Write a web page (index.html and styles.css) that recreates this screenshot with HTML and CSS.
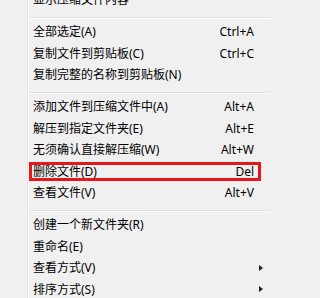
FILE: index.html
```html
<!DOCTYPE html>
<html lang="zh-CN">
<head>
<meta charset="utf-8">
<link rel="stylesheet" href="styles.css">
</head>
<body>
<div class="menu">
  <div class="item"><span class="label">显示压缩文件内容</span></div>
  <div class="sep"><div class="line"></div></div>
  <div class="item"><span class="label">全部选定(A)</span><span class="key">Ctrl+A</span></div>
  <div class="item"><span class="label">复制文件到剪贴板(C)</span><span class="key">Ctrl+C</span></div>
  <div class="item"><span class="label">复制完整的名称到剪贴板(N)</span></div>
  <div class="sep"><div class="line"></div></div>
  <div class="item"><span class="label">添加文件到压缩文件中(A)</span><span class="key">Alt+A</span></div>
  <div class="item"><span class="label">解压到指定文件夹(E)</span><span class="key">Alt+E</span></div>
  <div class="item"><span class="label">无须确认直接解压缩(W)</span><span class="key">Alt+W</span></div>
  <div class="item marked"><span class="label">删除文件(D)</span><span class="key">Del</span></div>
  <div class="item"><span class="label">查看文件(V)</span><span class="key">Alt+V</span></div>
  <div class="sep"><div class="line"></div></div>
  <div class="item"><span class="label">创建一个新文件夹(R)</span></div>
  <div class="item"><span class="label">重命名(E)</span></div>
  <div class="item sub"><span class="label">查看方式(V)</span><span class="arrow"></span></div>
  <div class="item sub"><span class="label">排序方式(S)</span><span class="arrow"></span></div>
</div>
</body>
</html>
```
FILE: styles.css
```css
html, body {
  margin: 0;
  padding: 0;
  background: #f0f0f0;
  overflow: hidden;
}
body {
  width: 270px;
  height: 298px;
}
.menu {
  margin-top: -10.5px;
  width: 270px;
  font-family: "Noto Sans", "Noto Sans CJK SC", sans-serif;
  font-size: 12px;
  color: #000;
  background:
    linear-gradient(to right, transparent 27px, #e2e3e3 27px, #e2e3e3 28px, #ffffff 28px, #ffffff 29px, transparent 29px),
    #f0f0f0;
}
.item {
  position: relative;
  height: 21.5px;
  display: flex;
  align-items: center;
  padding-left: 33px;
  padding-right: 16px;
  line-height: 14px;
}
.label {
  flex: 1;
  white-space: nowrap;
}
.key {
  white-space: nowrap;
  text-align: right;
}
.sep {
  box-sizing: border-box;
  height: 10.5px;
  padding-top: 5.5px;
  margin-left: 29px;
}
.line {
  height: 0;
  border-top: 1px solid #e0e0e0;
  border-bottom: 1px solid #ffffff;
}
.arrow {
  position: absolute;
  right: 7px;
  top: 50%;
  margin-top: -3.5px;
  width: 0;
  height: 0;
  border-top: 3.5px solid transparent;
  border-bottom: 3.5px solid transparent;
  border-left: 4px solid #1e1e1e;
}
.marked::after {
  content: "";
  position: absolute;
  left: 29px;
  right: 9px;
  top: 0.5px;
  bottom: 2px;
  border: 3px solid #e3171c;
}
```
